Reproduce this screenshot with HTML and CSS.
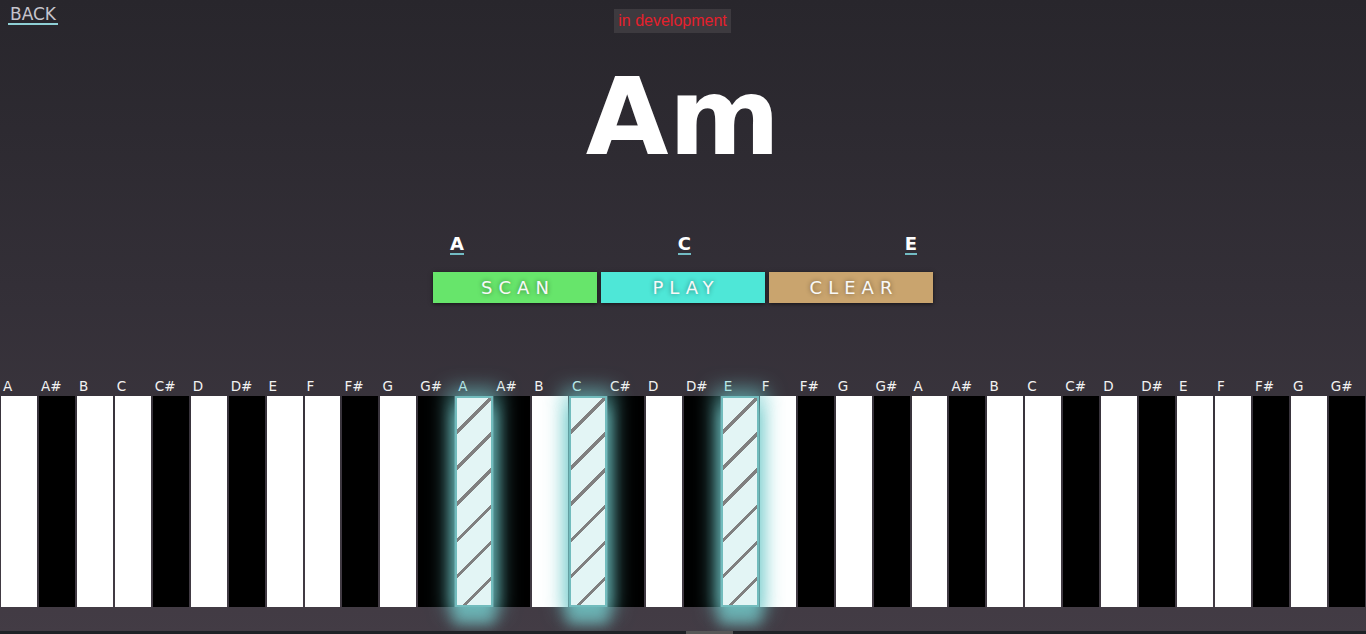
FILE: index.html
```html
<!DOCTYPE html>
<html>
<head>
<meta charset="utf-8">
<link rel="stylesheet" href="styles.css">
</head>
<body>
<div class="page">
  <header class="top">
    <div class="top-left"><a class="back" href="#">BACK</a></div>
    <div class="dev">in development</div>
    <div></div>
  </header>
  <h1 class="chord">Am</h1>
  <div class="notes">
    <span class="note">A</span>
    <span class="note">C</span>
    <span class="note">E</span>
  </div>
  <div class="actions">
    <button class="btn scan">SCAN</button>
    <button class="btn play">PLAY</button>
    <button class="btn clear">CLEAR</button>
  </div>
  <div class="keyboard">
    <div class="col"><span class="lbl">A</span><div class="key w"></div></div>
    <div class="col"><span class="lbl">A#</span><div class="key b"></div></div>
    <div class="col"><span class="lbl">B</span><div class="key w"></div></div>
    <div class="col"><span class="lbl">C</span><div class="key w"></div></div>
    <div class="col"><span class="lbl">C#</span><div class="key b"></div></div>
    <div class="col"><span class="lbl">D</span><div class="key w"></div></div>
    <div class="col"><span class="lbl">D#</span><div class="key b"></div></div>
    <div class="col"><span class="lbl">E</span><div class="key w"></div></div>
    <div class="col"><span class="lbl">F</span><div class="key w"></div></div>
    <div class="col"><span class="lbl">F#</span><div class="key b"></div></div>
    <div class="col"><span class="lbl">G</span><div class="key w"></div></div>
    <div class="col"><span class="lbl">G#</span><div class="key b"></div></div>
    <div class="col"><span class="lbl on">A</span><div class="key w on"></div></div>
    <div class="col"><span class="lbl">A#</span><div class="key b"></div></div>
    <div class="col"><span class="lbl">B</span><div class="key w"></div></div>
    <div class="col"><span class="lbl on">C</span><div class="key w on"></div></div>
    <div class="col"><span class="lbl">C#</span><div class="key b"></div></div>
    <div class="col"><span class="lbl">D</span><div class="key w"></div></div>
    <div class="col"><span class="lbl">D#</span><div class="key b"></div></div>
    <div class="col"><span class="lbl on">E</span><div class="key w on"></div></div>
    <div class="col"><span class="lbl">F</span><div class="key w"></div></div>
    <div class="col"><span class="lbl">F#</span><div class="key b"></div></div>
    <div class="col"><span class="lbl">G</span><div class="key w"></div></div>
    <div class="col"><span class="lbl">G#</span><div class="key b"></div></div>
    <div class="col"><span class="lbl">A</span><div class="key w"></div></div>
    <div class="col"><span class="lbl">A#</span><div class="key b"></div></div>
    <div class="col"><span class="lbl">B</span><div class="key w"></div></div>
    <div class="col"><span class="lbl">C</span><div class="key w"></div></div>
    <div class="col"><span class="lbl">C#</span><div class="key b"></div></div>
    <div class="col"><span class="lbl">D</span><div class="key w"></div></div>
    <div class="col"><span class="lbl">D#</span><div class="key b"></div></div>
    <div class="col"><span class="lbl">E</span><div class="key w"></div></div>
    <div class="col"><span class="lbl">F</span><div class="key w"></div></div>
    <div class="col"><span class="lbl">F#</span><div class="key b"></div></div>
    <div class="col"><span class="lbl">G</span><div class="key w"></div></div>
    <div class="col"><span class="lbl">G#</span><div class="key b"></div></div>
  </div>
  <div class="strip"></div>
  <div class="bar"><div class="thumb"></div></div>
</div>
</body>
</html>
```
FILE: styles.css
```css
* { box-sizing: border-box; }
html, body { margin: 0; padding: 0; }
body {
  width: 1366px;
  height: 634px;
  overflow: hidden;
  background: linear-gradient(to bottom, #28262c 0%, #332f37 45%, #433c45 100%);
  font-family: "DejaVu Sans", sans-serif;
  color: #fff;
}
.page {
  display: flex;
  flex-direction: column;
  height: 634px;
}
.top {
  display: grid;
  grid-template-columns: 1fr auto 1fr;
  align-items: start;
  height: 33px;
}
.top-left { padding-left: 8px; padding-top: 5px; }
.back {
  display: inline-block;
  font-family: "DejaVu Sans", sans-serif;
  font-size: 17px;
  line-height: 17px;
  color: #c6c4cc;
  text-decoration: none;
  padding: 0 2px;
  border-bottom: 2px solid #8fd0d6;
}
.dev {
  margin-top: 9px;
  margin-right: 21px;
  height: 24px;
  padding: 0 4px;
  background: #3d3a3f;
  color: #e5202c;
  font-family: "Liberation Sans", Arial, sans-serif;
  font-size: 16px;
  line-height: 24px;
}
.chord {
  margin: 28px 0 0;
  text-align: center;
  font-family: "DejaVu Sans", sans-serif;
  font-weight: bold;
  font-size: 107px;
  line-height: 112px;
  color: #fff;
}
.notes {
  margin: 62px auto 0;
  width: 500px;
  padding: 0 16px 0 17px;
  display: flex;
  justify-content: space-between;
}
.note {
  font-weight: bold;
  font-size: 18px;
  line-height: 18px;
  color: #fff;
  border-bottom: 2px solid #72bcc4;
}
.actions {
  margin: 17px auto 0;
  display: flex;
  gap: 4px;
}
.btn {
  width: 164px;
  height: 31px;
  border: none;
  padding: 0 0 0 6px;
  font-family: "DejaVu Sans", sans-serif;
  font-size: 18px;
  letter-spacing: 6px;
  color: #f8f8f8;
  text-shadow: 0 0 5px rgba(0,0,0,0.45);
  box-shadow: 0 1px 4px rgba(0,0,0,0.6);
}
.scan { background: #67e56b; }
.play { background: #4ee7d7; }
.clear { background: #c9a46e; }
.keyboard {
  margin-top: 73px;
  display: flex;
}
.col {
  flex: 1 1 0;
  display: flex;
  flex-direction: column;
  min-width: 0;
}
.lbl {
  height: 20px;
  padding-left: 3px;
  font-family: "DejaVu Sans", sans-serif;
  font-size: 13.5px;
  line-height: 20px;
  color: #f2f2f2;
  white-space: nowrap;
}
.lbl.on { color: #c8eeee; }
.key {
  height: 211px;
  margin: 0 1px;
}
.key.w { background: #fff; }
.key.b { background: #000; }
.key.on {
  position: relative;
  z-index: 1;
  margin: 0;
  border: 2px solid #72bcbd;
  background:
    repeating-linear-gradient(135deg, rgba(0,0,0,0) 0 22.5px, #808080 22.5px 25.5px),
    #e3f5f5;
  box-shadow: 0 0 20px 7px rgba(110, 205, 205, 0.65), 0 16px 14px 2px rgba(120, 200, 200, 0.7);
}
.strip { height: 24px; }
.bar {
  position: relative;
  z-index: 2;
  height: 3px;
  background: #1f2226;
}
.thumb {
  margin-left: 686px;
  width: 47px;
  height: 3px;
  background: #575757;
}
```
